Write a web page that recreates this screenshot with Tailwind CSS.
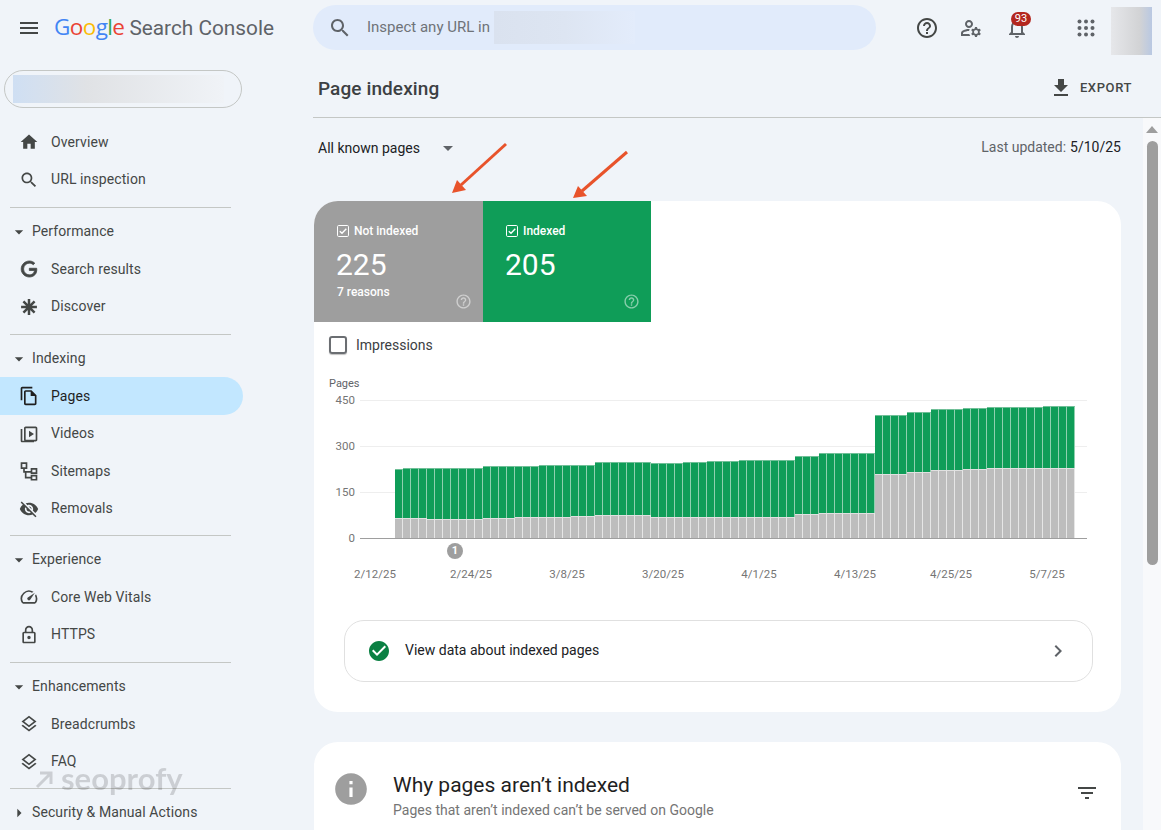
<!DOCTYPE html>
<html lang="en">
<head>
<meta charset="utf-8">
<title>Page indexing</title>
<script src="https://cdn.jsdelivr.net/npm/@tailwindcss/browser@4"></script>
</head>
<body class="m-0">
<div class="relative w-[1161px] h-[830px] overflow-hidden bg-[#f0f4f9] font-['Roboto',sans-serif] text-[#444746]">
  <header class="flex items-center h-[55px]">
    <svg class="ml-[17px] w-6 h-6 fill-[#444746]" viewBox="0 0 24 24"><path d="M3 18h18v-2H3v2zm0-5h18v-2H3v2zm0-7v2h18V6H3z"/></svg>
    <div class="ml-[13px] w-[260px] flex items-baseline font-['Open_Sans',sans-serif] text-[22.5px] leading-none tracking-[-0.6px]">
      <span class="text-[#4285f4]">G</span><span class="text-[#ea4335]">o</span><span class="text-[#fbbc05]">o</span><span class="text-[#4285f4]">g</span><span class="text-[#34a853]">l</span><span class="text-[#ea4335]">e</span>
      <span class="ml-[5px] font-['Roboto',sans-serif] text-[20.8px] tracking-normal text-[#5f6368]">Search Console</span>
    </div>
    <div class="ml-[-1px] w-[563px] h-[45px] rounded-full bg-[#e1ebfb] flex items-center pl-[15px]">
      <svg class="w-6 h-6 fill-[#5f6368]" viewBox="0 0 24 24"><path d="M15.5 14h-.79l-.28-.27C15.41 12.59 16 11.11 16 9.5 16 5.91 13.09 3 9.5 3S3 5.91 3 9.5 5.91 16 9.5 16c1.61 0 3.09-.59 4.23-1.57l.27.28v.79l5 4.99L20.49 19l-4.99-5zm-6 0C7.01 14 5 11.99 5 9.5S7.01 5 9.5 5 14 7.01 14 9.5 11.99 14 9.5 14z"/></svg>
      <span class="ml-[15px] text-[15px] text-[#6f7378]">Inspect any URL in</span>
      <div class="ml-[4px] w-[141px] h-[33px] bg-gradient-to-r from-[#dae2ef] via-[#dde5f2] to-[#e3ecfb]"></div>
    </div>
    <svg class="ml-[39px] w-6 h-6 fill-[#444746]" viewBox="0 0 24 24"><path d="M11 18h2v-2h-2v2zm1-16C6.48 2 2 6.48 2 12s4.48 10 10 10 10-4.48 10-10S17.52 2 12 2zm0 18c-4.41 0-8-3.59-8-8s3.59-8 8-8 8 3.59 8 8-3.59 8-8 8zm0-14c-2.21 0-4 1.79-4 4h2c0-1.1.9-2 2-2s2 .9 2 2c0 2-3 1.75-3 5h2c0-2.25 3-2.5 3-5 0-2.21-1.79-4-4-4z"/></svg>
    <svg class="ml-[20px] w-6 h-6 fill-[#5f6368]" viewBox="0 0 24 24"><path d="M4 18v-.65c0-.34.16-.66.41-.81C6.1 15.53 8.03 15 10 15c.03 0 .05 0 .08.01.1-.7.3-1.37.59-1.98-.22-.02-.44-.03-.67-.03-2.42 0-4.68.67-6.61 1.82-.88.52-1.39 1.5-1.39 2.53V20h9.26c-.42-.6-.75-1.28-.97-2H4zM10 12c2.21 0 4-1.79 4-4s-1.79-4-4-4-4 1.79-4 4 1.79 4 4 4zm0-6c1.1 0 2 .9 2 2s-.9 2-2 2-2-.9-2-2 .9-2 2-2zM20.75 16c0-.22-.03-.42-.06-.63l1.14-1.01-1-1.73-1.45.49c-.32-.27-.68-.48-1.08-.63L18 11h-2l-.3 1.49c-.4.15-.76.36-1.08.63l-1.45-.49-1 1.73 1.14 1.01c-.03.21-.06.41-.06.63s.03.42.06.63l-1.14 1.01 1 1.73 1.45-.49c.32.27.68.48 1.08.63L16 21h2l.3-1.49c.4-.15.76-.36 1.08-.63l1.45.49 1-1.73-1.14-1.01c.03-.21.06-.41.06-.63zM17 18c-1.1 0-2-.9-2-2s.9-2 2-2 2 .9 2 2-.9 2-2 2z"/></svg>
    <div class="relative ml-[22px] w-6 h-6">
      <svg class="w-6 h-6 fill-[#5f6368]" viewBox="0 0 24 24"><path d="M12 22c1.1 0 2-.9 2-2h-4c0 1.1.9 2 2 2zm6-6v-5c0-3.07-1.63-5.64-4.5-6.32V4c0-.83-.67-1.5-1.5-1.5s-1.5.67-1.5 1.5v.68C7.64 5.36 6 7.92 6 11v5l-2 2v1h16v-1l-2-2zm-2 1H8v-6c0-2.48 1.51-4.5 4-4.5s4 2.02 4 4.5v6z"/></svg>
      <span class="absolute left-[6px] top-[-4px] w-[20px] h-[14px] rounded-full bg-[#b3261e] text-white text-[11px] leading-[14px] text-center">93</span>
    </div>
    <svg class="ml-[45px] w-6 h-6 fill-[#5f6368]" viewBox="0 0 24 24"><circle cx="5.5" cy="5.5" r="2"/><circle cx="12" cy="5.5" r="2"/><circle cx="18.5" cy="5.5" r="2"/><circle cx="5.5" cy="12" r="2"/><circle cx="12" cy="12" r="2"/><circle cx="18.5" cy="12" r="2"/><circle cx="5.5" cy="18.5" r="2"/><circle cx="12" cy="18.5" r="2"/><circle cx="18.5" cy="18.5" r="2"/></svg>
    <div class="ml-[13px] mt-[6px] w-[41px] h-[48px] bg-gradient-to-r from-[#e6e7ea] via-[#d2d3d5] via-70% to-[#b9c8e2]"></div>
  </header>

  <div class="flex h-[775px]">
    <aside class="w-[313px] shrink-0 pt-[15px] text-[14px] tracking-[0.1px]">
      <div class="ml-[4px] w-[238px] h-[38px] rounded-full border border-[#c4c7c5] flex items-center pl-[8px]">
        <div class="w-[211px] h-[28px] bg-gradient-to-r from-[#cfdff3] via-[#e0e2e5] via-35% to-[#f0f3f7]"></div>
      </div>
      <nav class="mt-[15.25px]">
        <a class="flex items-center h-[37.5px] pl-[19px] gap-[12px]"><svg class="w-5 h-5 fill-[#444746]" viewBox="0 0 24 24"><path d="M10 20v-6h4v6h5v-8h3L12 3 2 12h3v8z"/></svg>Overview</a>
        <a class="flex items-center h-[37.5px] pl-[19px] gap-[12px]"><svg class="w-5 h-5 fill-[#444746]" viewBox="0 0 24 24"><path d="M15.5 14h-.79l-.28-.27C15.41 12.59 16 11.11 16 9.5 16 5.91 13.09 3 9.5 3S3 5.91 3 9.5 5.91 16 9.5 16c1.61 0 3.09-.59 4.23-1.57l.27.28v.79l5 4.99L20.49 19l-4.99-5zm-6 0C7.01 14 5 11.99 5 9.5S7.01 5 9.5 5 14 7.01 14 9.5 11.99 14 9.5 14z"/></svg>URL inspection</a>

        <div class="mt-[9px] ml-[10px] w-[221px] border-t border-[#c4c7c5] mb-[4.5px]"></div>
        <div class="flex items-center h-[37.5px] pl-[9px] gap-[3px]"><svg class="w-5 h-5 fill-[#444746]" viewBox="0 0 24 24"><path d="M7 10l5 5 5-5z"/></svg>Performance</div>
        <a class="flex items-center h-[37.5px] pl-[19px] gap-[12px]"><svg class="w-5 h-5 fill-[#444746] stroke-[#444746]" stroke-width="1.2" viewBox="-3 -3 30 30"><path d="M12.48 10.92v3.28h7.84c-.24 1.84-.853 3.187-1.787 4.133-1.147 1.147-2.933 2.4-6.053 2.4-4.827 0-8.6-3.893-8.6-8.72s3.773-8.72 8.6-8.72c2.6 0 4.507 1.027 5.907 2.347l2.307-2.307C18.747 1.44 16.133 0 12.48 0 5.867 0 .307 5.387.307 12s5.56 12 12.173 12c3.573 0 6.267-1.173 8.373-3.36 2.16-2.16 2.84-5.213 2.84-7.667 0-.76-.053-1.467-.173-2.053H12.48z"/></svg>Search results</a>
        <a class="flex items-center h-[37.5px] pl-[19px] gap-[12px]"><svg class="w-5 h-5 stroke-[#444746] fill-[#444746]" stroke-width="3" viewBox="0 0 24 24"><path d="M12 2.500v19M2.500 12h19M5.300 5.300l13.400 13.400M18.700 5.300 5.300 18.700"/><circle cx="12" cy="12" r="2.500" stroke="none"/></svg>Discover</a>

        <div class="mt-[9px] ml-[10px] w-[221px] border-t border-[#c4c7c5] mb-[4.5px]"></div>
        <div class="flex items-center h-[37.5px] pl-[9px] gap-[3px]"><svg class="w-5 h-5 fill-[#444746]" viewBox="0 0 24 24"><path d="M7 10l5 5 5-5z"/></svg>Indexing</div>
        <a class="flex items-center h-[37.5px] w-[243px] pl-[19px] gap-[12px] rounded-r-full bg-[#c2e7ff] text-[#1f1f1f]"><svg class="w-5 h-5 fill-[#1f1f1f]" viewBox="0 0 24 24"><path d="M16 1H4c-1.1 0-2 .9-2 2v14h2V3h12V1zm-1 4H8c-1.1 0-1.99.9-1.99 2L6 21c0 1.1.89 2 1.99 2H19c1.1 0 2-.9 2-2V11l-6-6zM8 21V7h6v5h5v9H8z"/></svg>Pages</a>
        <a class="flex items-center h-[37.5px] pl-[19px] gap-[12px]"><svg class="w-5 h-5 fill-[#444746]" viewBox="0 0 24 24"><path d="M4 6H2v14c0 1.1.9 2 2 2h14v-2H4V6z"/><path d="M20 2H8c-1.1 0-2 .9-2 2v14c0 1.1.9 2 2 2h12c1.1 0 2-.9 2-2V4c0-1.1-.9-2-2-2zm0 16H8V4h12v14zM12 7v8l6-4z" transform="translate(0 1)"/></svg>Videos</a>
        <a class="flex items-center h-[37.5px] pl-[19px] gap-[12px]"><svg class="w-5 h-5 stroke-[#444746] fill-none" stroke-width="2" viewBox="0 0 24 24"><path d="M3 2.500h6v6H3zM15 9.500h6v5h-6zM15 17.500h6v5h-6zM6 8.500v4.500h9M8 13v7h7"/></svg>Sitemaps</a>
        <a class="flex items-center h-[37.5px] pl-[19px] gap-[12px]"><svg class="w-5 h-5 fill-[#444746]" viewBox="0 0 24 24"><path d="M12 7c2.760 0 5 2.240 5 5 0 .65-.13 1.260-.36 1.830l2.920 2.920c1.510-1.260 2.700-2.890 3.430-4.750-1.730-4.390-6-7.500-11-7.500-1.400 0-2.740.25-3.980.7l2.160 2.160C10.740 7.130 11.350 7 12 7zM2 4.270l2.280 2.280.46.46C3.080 8.300 1.780 10.020 1 12c1.730 4.390 6 7.500 11 7.500 1.550 0 3.030-.3 4.380-.84l.42.42L19.730 22 21 20.730 3.270 3 2 4.270zM7.530 9.800l1.550 1.550c-.05.21-.08.43-.08.65 0 1.660 1.340 3 3 3 .22 0 .44-.03.65-.08l1.550 1.550c-.67.33-1.410.53-2.200.53-2.760 0-5-2.240-5-5 0-.79.2-1.530.53-2.200zm4.310-.78l3.150 3.150.02-.16c0-1.660-1.340-3-3-3l-.17.01z"/></svg>Removals</a>

        <div class="mt-[8px] ml-[10px] w-[221px] border-t border-[#c4c7c5] mb-[4.5px]"></div>
        <div class="flex items-center h-[37.5px] pl-[9px] gap-[3px]"><svg class="w-5 h-5 fill-[#444746]" viewBox="0 0 24 24"><path d="M7 10l5 5 5-5z"/></svg>Experience</div>
        <a class="flex items-center h-[37.5px] pl-[19px] gap-[12px]"><svg class="w-5 h-5 fill-[#444746]" viewBox="0 0 24 24"><path d="M20.380 8.570l-1.230 1.850a8 8 0 0 1-.22 7.580H5.070A8 8 0 0 1 15.580 6.850l1.850-1.230A10 10 0 0 0 3.350 19a2 2 0 0 0 1.720 1h13.850a2 2 0 0 0 1.740-1 10 10 0 0 0-.27-10.440zm-9.790 6.840a2 2 0 0 0 2.830 0l5.660-8.490-8.490 5.660a2 2 0 0 0 0 2.830z"/></svg>Core Web Vitals</a>
        <a class="flex items-center h-[37.5px] pl-[19px] gap-[12px]"><svg class="w-5 h-5 fill-[#444746]" viewBox="0 0 24 24"><path d="M18 8h-1V6c0-2.760-2.240-5-5-5S7 3.240 7 6v2H6c-1.100 0-2 .9-2 2v10c0 1.100.9 2 2 2h12c1.100 0 2-.9 2-2V10c0-1.100-.9-2-2-2zM9 6c0-1.660 1.340-3 3-3s3 1.340 3 3v2H9V6zm9 14H6V10h12v10zm-6-3c1.100 0 2-.9 2-2s-.9-2-2-2-2 .9-2 2 .9 2 2 2z"/></svg>HTTPS</a>

        <div class="mt-[9px] ml-[10px] w-[221px] border-t border-[#c4c7c5] mb-[4.5px]"></div>
        <div class="flex items-center h-[37.5px] pl-[9px] gap-[3px]"><svg class="w-5 h-5 fill-[#444746]" viewBox="0 0 24 24"><path d="M7 10l5 5 5-5z"/></svg>Enhancements</div>
        <a class="flex items-center h-[37.5px] pl-[19px] gap-[12px]"><svg class="w-5 h-5 fill-[#444746]" viewBox="0 0 24 24"><path d="M11.990 18.540l-7.370-5.730L3 14.070l9 7 9-7-1.630-1.270zM12 16l7.360-5.730L21 9l-9-7-9 7 1.630 1.270L12 16zm0-11.470L17.740 9 12 13.470 6.260 9 12 4.530z"/></svg>Breadcrumbs</a>
        <a class="flex items-center h-[37.5px] pl-[19px] gap-[12px]"><svg class="w-5 h-5 fill-[#444746]" viewBox="0 0 24 24"><path d="M11.990 18.540l-7.370-5.730L3 14.070l9 7 9-7-1.630-1.270zM12 16l7.360-5.730L21 9l-9-7-9 7 1.630 1.270L12 16zm0-11.470L17.740 9 12 13.470 6.260 9 12 4.530z"/></svg>FAQ</a>

        <div class="mt-[8px] ml-[10px] w-[221px] border-t border-[#c4c7c5] mb-[4.5px]"></div>
        <div class="flex items-center h-[37.5px] pl-[9px] gap-[3px]"><svg class="w-5 h-5 fill-[#444746]" viewBox="0 0 24 24"><path d="M10 17l5-5-5-5z"/></svg>Security &amp; Manual Actions</div>
      </nav>
    </aside>

    <main class="w-[848px] flex flex-col">
      <div class="h-[63px] shrink-0 border-b border-[#c4c7c5] flex items-center pl-[5px] pt-[4px]">
        <h1 class="text-[19px] font-medium text-[#3c4043] tracking-[0.1px] mt-[3px]">Page indexing</h1>
        <svg class="ml-auto w-6 h-6 fill-[#444746]" viewBox="0 0 24 24"><path d="M5 20h14v-2H5v2zM19 9h-4V3H9v6H5l7 7 7-7z"/></svg>
        <span class="ml-[7px] mr-[29px] text-[13px] font-medium tracking-[0.6px] text-[#444746]">EXPORT</span>
      </div>
      <div class="flex flex-1 min-h-0">
        <div class="w-[830px] shrink-0 overflow-hidden pl-px">
          <div class="flex items-center h-[60px] w-[807px] text-[14px] text-[#202124] pl-[4px]">
            <span>All known pages</span>
            <svg class="ml-[16px] w-6 h-6 fill-[#5f6368]" viewBox="0 0 24 24"><path d="M7 10l5 5 5-5z"/></svg>
            <span class="ml-auto mb-[2px] text-[#5f6368]">Last updated:</span><span class="ml-[4px] mb-[2px]">5/10/25</span>
          </div>

          <section class="mt-[23px] w-[807px] h-[511px] rounded-[24px] bg-white overflow-hidden">
            <div class="flex h-[121px] text-white">
              <div class="relative w-[169px] bg-[#9e9e9e] pl-[23px] pt-[21px]">
                <div class="flex items-center gap-[5px] text-[12px] font-medium">
                  <svg class="w-3 h-3" viewBox="0 0 12 12"><rect x=".5" y=".5" width="11" height="11" rx="1.200" fill="none" stroke="#fff"/><path d="M2.800 6.200 5 8.300 9.300 3.800" fill="none" stroke="#fff" stroke-width="1.400"/></svg>
                  Not indexed
                </div>
                <div class="mt-[5px] ml-[-1px] text-[30px] leading-[40px]">225</div>
                <div class="mt-[-1px] text-[12px] leading-[16px] font-medium">7 reasons</div>
                <svg class="absolute right-[11px] bottom-[12px] w-[17px] h-[17px] fill-white/50" viewBox="0 0 24 24"><path d="M11 18h2v-2h-2v2zm1-16C6.480 2 2 6.480 2 12s4.480 10 10 10 10-4.480 10-10S17.520 2 12 2zm0 18c-4.410 0-8-3.590-8-8s3.590-8 8-8 8 3.590 8 8-3.590 8-8 8zm0-14c-2.210 0-4 1.790-4 4h2c0-1.100.9-2 2-2s2 .9 2 2c0 2-3 1.750-3 5h2c0-2.250 3-2.500 3-5 0-2.210-1.790-4-4-4z"/></svg>
              </div>
              <div class="relative w-[168px] bg-[#0f9d58] pl-[23px] pt-[21px]">
                <div class="flex items-center gap-[5px] text-[12px] font-medium">
                  <svg class="w-3 h-3" viewBox="0 0 12 12"><rect x=".5" y=".5" width="11" height="11" rx="1.200" fill="none" stroke="#fff"/><path d="M2.800 6.200 5 8.300 9.300 3.800" fill="none" stroke="#fff" stroke-width="1.400"/></svg>
                  Indexed
                </div>
                <div class="mt-[5px] ml-[-1px] text-[30px] leading-[40px]">205</div>
                <svg class="absolute right-[11px] bottom-[12px] w-[17px] h-[17px] fill-white/50" viewBox="0 0 24 24"><path d="M11 18h2v-2h-2v2zm1-16C6.480 2 2 6.480 2 12s4.480 10 10 10 10-4.480 10-10S17.520 2 12 2zm0 18c-4.410 0-8-3.590-8-8s3.590-8 8-8 8 3.590 8 8-3.590 8-8 8zm0-14c-2.210 0-4 1.790-4 4h2c0-1.100.9-2 2-2s2 .9 2 2c0 2-3 1.750-3 5h2c0-2.250 3-2.500 3-5 0-2.210-1.790-4-4-4z"/></svg>
              </div>
            </div>

            <div class="flex items-center h-[46px] pl-[15px] text-[14px] text-[#3c4043]">
              <span class="w-[18px] h-[18px] rounded-[3px] border-2 border-[#6b6e72] shadow-[0_1px_1px_rgba(0,0,0,0.25)]"></span>
              <span class="ml-[9px]">Impressions</span>
            </div>

            <div class="flex items-center h-[32px] pl-[15px] pt-[1px] text-[11px] text-[#5f6368]">Pages</div>
            <div class="relative ml-[15px] w-[758px] h-[139px] flex flex-col justify-between text-[11.5px] text-[#757575]">
              <div class="flex items-center h-px"><span class="w-[26px] text-right">450</span><span class="ml-[5px] flex-1 h-px bg-[#eeeeee]"></span></div>
              <div class="flex items-center h-px"><span class="w-[26px] text-right">300</span><span class="ml-[5px] flex-1 h-px bg-[#eeeeee]"></span></div>
              <div class="flex items-center h-px"><span class="w-[26px] text-right">150</span><span class="ml-[5px] flex-1 h-px bg-[#eeeeee]"></span></div>
              <div class="flex items-center h-px"><span class="w-[26px] text-right">0</span><span class="ml-[5px] flex-1 h-px bg-[#9e9e9e]"></span></div>
              <div id="bars" class="absolute left-[66px] bottom-px flex items-end"></div>
            </div>
            <div class="flex items-center h-[24px] pl-[133px]">
              <span class="w-4 h-4 rounded-full bg-[#9e9e9e] text-white text-[11px] font-bold leading-4 text-center">1</span>
            </div>
            <div class="flex h-[22px] items-center pt-[2px] pl-[13px] text-[11.5px] text-[#757575]">
              <span class="w-[96px] text-center">2/12/25</span><span class="w-[96px] text-center">2/24/25</span><span class="w-[96px] text-center">3/8/25</span><span class="w-[96px] text-center">3/20/25</span><span class="w-[96px] text-center">4/1/25</span><span class="w-[96px] text-center">4/13/25</span><span class="w-[96px] text-center">4/25/25</span><span class="w-[96px] text-center">5/7/25</span>
            </div>

            <div class="mt-[35px] ml-[30px] w-[749px] h-[62px] rounded-[20px] border border-[#e0e0e0] flex items-center pl-[22px] text-[14px] text-[#202124]">
              <svg class="w-[24px] h-[24px] fill-[#0b8043]" viewBox="0 0 24 24"><path d="M12 2C6.480 2 2 6.480 2 12s4.480 10 10 10 10-4.480 10-10S17.520 2 12 2zm-2 15l-5-5 1.410-1.410L10 14.170l7.590-7.590L19 8l-9 9z"/></svg>
              <span class="ml-[14px] mb-[2px]">View data about indexed pages</span>
              <svg class="ml-auto mr-[22px] w-6 h-6 fill-[#5f6368]" viewBox="0 0 24 24"><path d="M10 6L8.590 7.410 13.170 12l-4.580 4.590L10 18l6-6z"/></svg>
            </div>
          </section>

          <section class="mt-[30px] w-[807px] h-[200px] rounded-[24px] bg-white flex items-start pt-[27px] pl-[18px]">
            <svg class="mt-[1px] w-[38px] h-[38px] fill-[#9e9e9e]" viewBox="0 0 24 24"><path d="M12 2C6.480 2 2 6.480 2 12s4.480 10 10 10 10-4.480 10-10S17.520 2 12 2zm1 15h-2v-6h2v6zm0-8h-2V7h2v2z"/></svg>
            <div class="ml-[23px]">
              <h2 class="text-[21px] leading-[32px] text-[#1f1f1f]">Why pages aren’t indexed</h2>
              <p class="text-[14px] tracking-[0.01px] leading-[18px] text-[#757575]">Pages that aren’t indexed can’t be served on Google</p>
            </div>
            <svg class="ml-auto mr-[22px] mt-[12px] w-6 h-6 fill-[#444746]" viewBox="0 0 24 24"><path d="M10 18h4v-2h-4v2zM3 6v2h18V6H3zm3 7h12v-2H6v2z"/></svg>
          </section>
        </div>
        <div class="w-[18px] bg-[#f8f9fb] flex flex-col items-center pt-[8px]">
          <span class="w-0 h-0 border-x-[6px] border-x-transparent border-b-[7px] border-b-[#9e9e9e]"></span>
          <span class="mt-[8px] w-[11px] h-[424px] rounded-full bg-[#9e9e9e]"></span>
        </div>
      </div>
    </main>
  </div>

  <svg class="absolute left-[445px] top-[138px] w-[190px] h-[66px] pointer-events-none" viewBox="445 138 190 66">
    <path d="M506 144 461 185" fill="none" stroke="#e8532b" stroke-width="3"/><path d="M452 193 457 180 466 190z" fill="#e8532b"/>
    <path d="M627 152 582 191" fill="none" stroke="#e8532b" stroke-width="3"/><path d="M573 198 578 186 587 196z" fill="#e8532b"/>
  </svg>

  <div class="absolute left-[35px] top-[760px] flex items-center gap-[8px] opacity-[0.15] blur-[0.6px] pointer-events-none text-black">
    <svg class="w-[18px] h-[18px] mt-[4px] stroke-black fill-none" stroke-width="3" viewBox="0 0 18 18"><path d="M2 16 15 3M5 2h11v11"/></svg>
    <span class="font-['Lato',sans-serif] font-bold text-[31px] leading-[36px]">seoprofy</span>
  </div>
</div>
<script>
  var groups = [
    [1,69.5,20],[3,70.5,20],[7,70.5,19],[4,72,20],[3,72,21],[4,73,21],[3,73,22],[7,76,23],[4,75,21],[3,76,21],[4,77,21],[7,78,21],[3,82,24],[7,84.7,25],[4,123,63.7],[3,126,65.7],[4,128.7,67.7],[3,129.7,68.7],[7,130.7,70.3],[4,132.3,70.3]
  ];
  var host = document.getElementById('bars');
  groups.forEach(function (g) {
    for (var i = 0; i < g[0]; i++) {
      var bar = document.createElement('div');
      bar.className = 'w-[8px] flex flex-col';
      var green = document.createElement('div');
      green.className = 'bg-[#0f9d58] border-r border-r-[#8fd0af] border-t border-t-[#6fbf97]';
      green.style.height = (g[1] - g[2]) + 'px';
      var grey = document.createElement('div');
      grey.className = 'bg-[#bdbdbd] border-r border-r-[#e6e6e6] border-t border-t-[#e0e0e0]';
      grey.style.height = g[2] + 'px';
      bar.appendChild(green);
      bar.appendChild(grey);
      host.appendChild(bar);
    }
  });
</script>
</body>
</html>
